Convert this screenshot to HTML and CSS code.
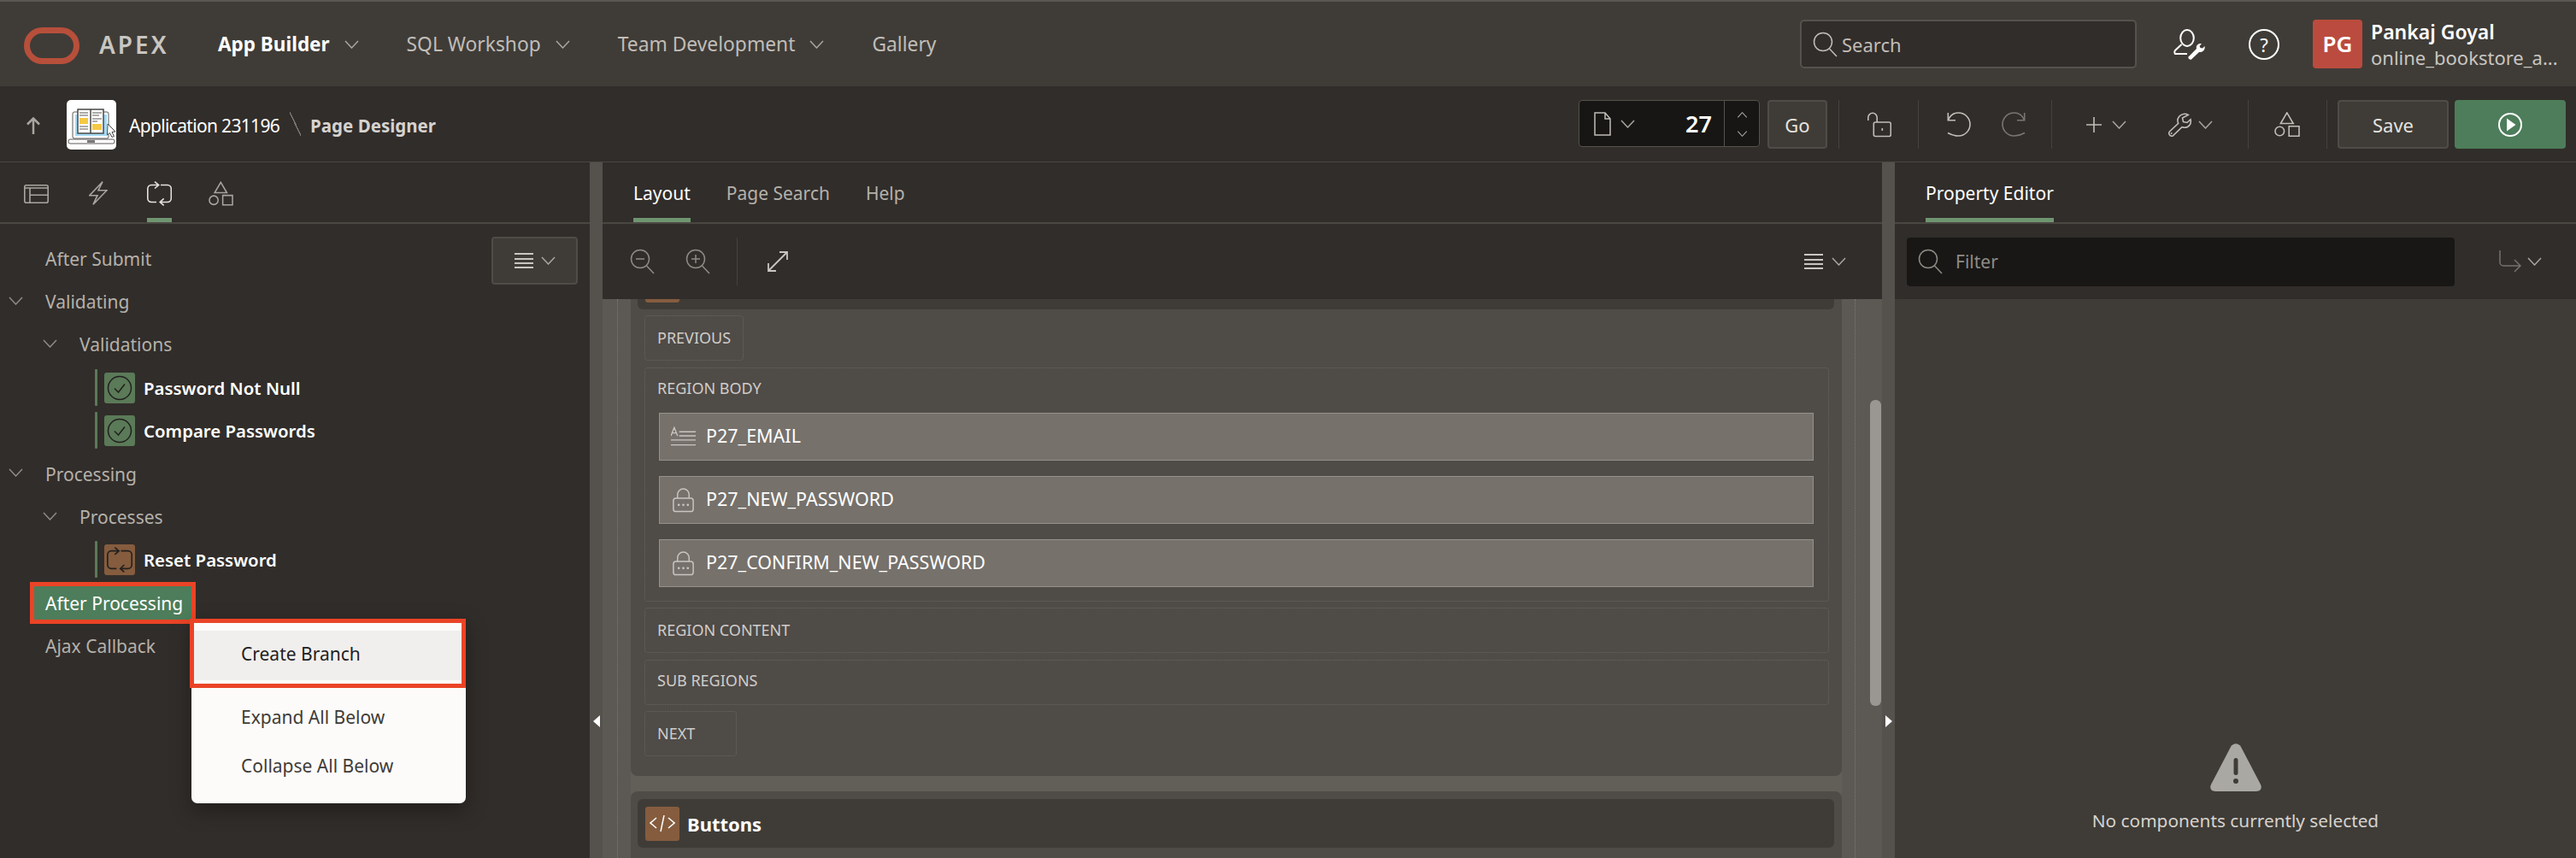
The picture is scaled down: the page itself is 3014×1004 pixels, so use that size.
FILE: index.html
```html
<!DOCTYPE html>
<html lang="en">
<head>
    <meta charset="UTF-8">
    <title>Page Designer</title>
    <link rel="stylesheet" href="styles.css">
</head>
<body>
    <svg class="sprite" width="0" height="0">
        <symbol id="i-chev" viewBox="0 0 17 10"><polyline points="1,1 8.5,9 16,1" fill="none" stroke="currentColor" stroke-width="1.5"/></symbol>
        <symbol id="i-search" viewBox="0 0 30 30"><circle cx="12" cy="12" r="10.5" fill="none" stroke="currentColor" stroke-width="1.5"/><line x1="19.5" y1="20" x2="28" y2="29" stroke="currentColor" stroke-width="1.5"/></symbol>
        <symbol id="i-menu" viewBox="0 0 22 20"><path d="M0 2h22M0 8h22M0 13h22M0 18h22" fill="none" stroke="currentColor" stroke-width="2"/></symbol>
        <symbol id="i-shapes" viewBox="0 0 30 29"><path d="M14.8.9l7.4 12.6H7.4z M1 22.5a5.3 5.3 0 1 0 10.6 0a5.3 5.3 0 1 0-10.6 0z M17.2 16.7h11.8v11.6H17.2z" fill="none" stroke="currentColor" stroke-width="1.6"/></symbol>
        <symbol id="i-sync" viewBox="0 0 29 29"><path d="M13.5 4.5H5A4.5 4.5 0 0 0 .8 9v11A4.5 4.5 0 0 0 5 24.5h6 M9 .7l4.7 3.8L9 8.5 M16 4.5h8A4.5 4.5 0 0 1 28.3 9v11a4.5 4.5 0 0 1-4.3 4.5h-8.5 M19.7 20.3l-4.5 4.2 4.5 3.8" fill="none" stroke="currentColor" stroke-width="1.6"/></symbol>
        <symbol id="i-check" viewBox="0 0 36 36"><circle cx="18" cy="18" r="13.5" fill="none" stroke="currentColor" stroke-width="1.5"/><polyline points="12,18.5 16.5,23 24,13.5" fill="none" stroke="currentColor" stroke-width="1.5"/></symbol>
        <symbol id="i-lock" viewBox="0 0 30 30"><path d="M8 13V8.5a7 7 0 0 1 14 0V13" fill="none" stroke="currentColor" stroke-width="1.5"/><rect x="3" y="13" width="24" height="16" rx="3" fill="none" stroke="currentColor" stroke-width="1.5"/><circle cx="9.5" cy="21" r="1.4" fill="currentColor"/><circle cx="15" cy="21" r="1.4" fill="currentColor"/><circle cx="20.5" cy="21" r="1.4" fill="currentColor"/></symbol>
        <symbol id="i-undo" viewBox="0 0 28 30"><path d="M1.3 9.7C3.5 4.5 8 1 13.5 1a13.5 13.5 0 0 1 0 27c-5 0-9-1.5-12.500-3.5 M1.3 1v8.700H10" fill="none" stroke="currentColor" stroke-width="1.6"/></symbol>
    </svg>

    <header class="topbar">
        <svg class="logo" viewBox="0 0 65 43"><rect x="3.5" y="3.5" width="58" height="36" rx="18" fill="none" stroke="#b74f3b" stroke-width="7"/></svg>
        <span class="brand">APEX</span>
        <nav class="nav">
            <a class="nav-link is-active">App Builder<svg class="chev"><use href="#i-chev"/></svg></a>
            <a class="nav-link">SQL Workshop<svg class="chev"><use href="#i-chev"/></svg></a>
            <a class="nav-link">Team Development<svg class="chev"><use href="#i-chev"/></svg></a>
            <a class="nav-link">Gallery</a>
        </nav>
        <div class="global-search">
            <svg class="icon-28"><use href="#i-search"/></svg>
            <span>Search</span>
        </div>
        <svg class="user-tool" viewBox="0 0 38 36">
            <ellipse cx="16" cy="10.5" rx="7.8" ry="9.5" fill="none" stroke="currentColor" stroke-width="2"/>
            <path d="M9.5 18L2 25c-.8 1-1 3 0 4h14" fill="none" stroke="currentColor" stroke-width="2"/>
            <path d="M17.5 32.5L27 23c-1-4 2-6.5 6-6l-2.5 3 1 2 2.5.5 2.5-2.5c1 4-2.5 7.5-6.5 7L21 35.5c-1.5 1-4.5-1-3.5-3z" fill="currentColor"/>
        </svg>
        <div class="help">?</div>
        <div class="avatar">PG</div>
        <div class="user-info">
            <div class="user-name">Pankaj Goyal</div>
            <div class="user-app">online_bookstore_a...</div>
        </div>
    </header>

    <div class="subbar">
        <svg class="up-arrow" viewBox="0 0 16 20"><path d="M8 20V2M1 8.5L8 1.5l7 7" fill="none" stroke="currentColor" stroke-width="2.5"/></svg>
        <div class="app-icon">
            <svg viewBox="0 0 58 58" width="58" height="58">
                <rect x="7" y="14" width="42" height="31" rx="2" fill="#fff" stroke="#5c5a58" stroke-width="1"/>
                <rect x="10" y="17" width="37" height="25" fill="#a6daf4"/>
                <path d="M13 11h15v28H13z M28 11h15v28H28z" fill="#fff" stroke="#4a4846" stroke-width="1.5"/>
                <rect x="15" y="21" width="10" height="7" fill="#f6c945"/>
                <rect x="30" y="28" width="11" height="7" fill="#f6c945"/>
                <path d="M15 15h10M15 18h10M15 31h10M15 34h10M30 15h11M30 18h8M30 22h11M30 25h6" stroke="#5c5a58" stroke-width="1.2"/>
                <rect x="2" y="46" width="54" height="5" rx="2" fill="#fff" stroke="#5c5a58" stroke-width="1"/>
                <rect x="24" y="47" width="9" height="3" fill="#777"/>
                <path d="M48 28l9 9-4 .5 2.5 5-2.5 1-2.5-5-3 2.5z" fill="#fff" stroke="#444" stroke-width="1"/>
            </svg>
        </div>
        <span class="crumb">Application 231196</span>
        <span class="crumb-sep"></span>
        <span class="crumb-page">Page Designer</span>

        <div class="toolbar">
            <div class="page-picker">
                <svg class="page-icon" viewBox="0 0 20 28"><path d="M1 1h12l6 7v19H1z M13 1v7h6" fill="none" stroke="currentColor" stroke-width="1.5"/></svg>
                <svg class="chev"><use href="#i-chev"/></svg>
                <span class="page-num">27</span>
                <div class="spinner">
                    <svg class="spin-chev up"><use href="#i-chev"/></svg>
                    <svg class="spin-chev"><use href="#i-chev"/></svg>
                </div>
            </div>
            <button class="btn btn-go">Go</button>
            <i class="tool-sep sep-a"></i>
            <svg class="tool-lock" viewBox="0 0 28 30"><path d="M.8 10V6.5a5.2 5.2 0 0 1 10.4 0V12" fill="none" stroke="currentColor" stroke-width="1.6"/><rect x="7.3" y="12" width="20" height="16.5" rx="2" fill="none" stroke="currentColor" stroke-width="1.6"/><rect x="16.5" y="19" width="1.6" height="3" fill="currentColor"/></svg>
            <i class="tool-sep sep-b"></i>
            <svg class="tool-undo"><use href="#i-undo"/></svg>
            <svg class="tool-redo"><use href="#i-undo"/></svg>
            <i class="tool-sep sep-c"></i>
            <svg class="tool-plus" viewBox="0 0 18 18"><path d="M9 0v18M0 9h18" stroke="currentColor" stroke-width="1.6"/></svg>
            <svg class="chev chev-plus"><use href="#i-chev"/></svg>
            <svg class="tool-wrench" viewBox="0 0 28 30"><path d="M23.3 3.5C20 1.5 15 2 12.5 5.5 10.5 8.3 10.5 11 11.7 13.3L1.7 22.7c-2 2-.5 6 3 5.5l.5-.2L16 17.7c3.5 1 7 .3 9-2.500 1.5-2 1.5-4.5 1-6.500L22 12.500l-4.500-1-1-4.500z" fill="none" stroke="currentColor" stroke-width="1.6"/><circle cx="3.7" cy="25" r="1" fill="currentColor"/></svg>
            <svg class="chev chev-wrench"><use href="#i-chev"/></svg>
            <i class="tool-sep sep-d"></i>
            <svg class="tool-shapes"><use href="#i-shapes"/></svg>
            <i class="tool-sep sep-e"></i>
            <button class="btn btn-save">Save</button>
            <button class="btn-run">
                <svg viewBox="0 0 30 30" width="30" height="30"><circle cx="15" cy="15" r="13" fill="none" stroke="#fff" stroke-width="2"/><path d="M11 7.5l10.5 7.5-10.5 7.5z" fill="#fff"/></svg>
            </button>
        </div>
    </div>

    <main class="designer">
        <section class="panel-left">
            <div class="tabs tabs-icons">
                <div class="icon-tab">
                    <svg viewBox="0 0 29 22" class="tab-svg"><rect x=".8" y=".8" width="27.4" height="20.4" rx="2" fill="none" stroke="currentColor" stroke-width="1.6"/><path d="M1 4h27M7 12.3h21M7 4v17" fill="none" stroke="currentColor" stroke-width="1.6"/></svg>
                </div>
                <div class="icon-tab">
                    <svg viewBox="0 0 22 29" class="tab-svg tab-bolt"><path d="M16 .7L.7 16.7H10L5 27.3 21 10.7H11z" fill="none" stroke="currentColor" stroke-width="1.6"/></svg>
                </div>
                <div class="icon-tab is-active">
                    <svg class="tab-svg tab-square"><use href="#i-sync"/></svg>
                </div>
                <div class="icon-tab">
                    <svg class="tab-svg tab-square"><use href="#i-shapes"/></svg>
                </div>
            </div>
            <div class="tree">
                <div class="tree-row lvl-0"><span class="tree-label">After Submit</span></div>
                <div class="tree-row lvl-0"><svg class="tree-chev"><use href="#i-chev"/></svg><span class="tree-label">Validating</span></div>
                <div class="tree-row lvl-1"><svg class="tree-chev"><use href="#i-chev"/></svg><span class="tree-label">Validations</span></div>
                <div class="tree-row lvl-2"><span class="node-icon node-green"><svg><use href="#i-check"/></svg></span><span class="node-label">Password Not Null</span></div>
                <div class="tree-row lvl-2"><span class="node-icon node-green"><svg><use href="#i-check"/></svg></span><span class="node-label">Compare Passwords</span></div>
                <div class="tree-row lvl-0"><svg class="tree-chev"><use href="#i-chev"/></svg><span class="tree-label">Processing</span></div>
                <div class="tree-row lvl-1"><svg class="tree-chev"><use href="#i-chev"/></svg><span class="tree-label">Processes</span></div>
                <div class="tree-row lvl-2"><span class="node-icon node-brown"><svg class="node-sync"><use href="#i-sync"/></svg></span><span class="node-label">Reset Password</span></div>
                <div class="tree-row lvl-0"><span class="tree-label is-selected">After Processing</span></div>
                <div class="tree-row lvl-0"><span class="tree-label">Ajax Callback</span></div>
            </div>
            <button class="btn tree-menu-btn"><svg class="menu-icon"><use href="#i-menu"/></svg><svg class="chev"><use href="#i-chev"/></svg></button>
            <div class="context-menu">
                <div class="menu-item is-highlight">Create Branch</div>
                <div class="menu-item first-plain">Expand All Below</div>
                <div class="menu-item">Collapse All Below</div>
            </div>
        </section>

        <div class="splitter"><svg class="split-arrow" viewBox="0 0 8 14"><path d="M8 0v14L0 7z" fill="#fff"/></svg></div>

        <section class="panel-center">
            <div class="tabs tabs-text">
                <span class="text-tab is-active">Layout</span>
                <span class="text-tab">Page Search</span>
                <span class="text-tab">Help</span>
            </div>
            <div class="center-tools">
                <svg class="zoom-icon" viewBox="0 0 30 30"><use href="#i-search"/><path d="M7 12h10" stroke="currentColor" stroke-width="1.5"/></svg>
                <svg class="zoom-icon" viewBox="0 0 30 30"><use href="#i-search"/><path d="M7 12h10M12 7v10" stroke="currentColor" stroke-width="1.5"/></svg>
                <i class="center-sep"></i>
                <svg class="expand-icon" viewBox="0 0 24 24"><path d="M1 23L23 1M14 1h9v9M1 14v9h9" fill="none" stroke="currentColor" stroke-width="1.8"/></svg>
                <div class="center-menu"><svg class="menu-icon"><use href="#i-menu"/></svg><svg class="chev"><use href="#i-chev"/></svg></div>
            </div>
            <div class="canvas">
                <div class="card card-scrolled">
                    <div class="card-head"><span class="card-icon"></span></div>
                    <div class="slots">
                        <div class="slot slot-small slot-prev">PREVIOUS</div>
                        <div class="slot slot-body">
                            <div class="slot-title">REGION BODY</div>
                            <div class="items">
                                <div class="item">
                                    <svg class="item-icon" viewBox="0 0 30 30"><path d="M0 14L4 4l4 10M1.5 10.5h5 M10 9h20M10 14h20M0 19h30M0 25h30" fill="none" stroke="currentColor" stroke-width="1.4"/></svg>
                                    P27_EMAIL
                                </div>
                                <div class="item"><svg class="item-icon"><use href="#i-lock"/></svg>P27_NEW_PASSWORD</div>
                                <div class="item"><svg class="item-icon"><use href="#i-lock"/></svg>P27_CONFIRM_NEW_PASSWORD</div>
                            </div>
                        </div>
                        <div class="slot slot-wide">REGION CONTENT</div>
                        <div class="slot slot-wide slot-sub">SUB REGIONS</div>
                        <div class="slot slot-small slot-next">NEXT</div>
                    </div>
                </div>
                <div class="card card-buttons">
                    <div class="card-head">
                        <span class="card-icon"><svg viewBox="0 0 30 20" width="30" height="20"><path d="M8 3L1 9l7 6M22 3l7 6-7 6M17 0l-4 19" fill="none" stroke="#fff" stroke-width="1.5"/></svg></span>
                        <span class="card-title">Buttons</span>
                    </div>
                </div>
                <div class="scrollbar"></div>
            </div>
        </section>

        <div class="splitter"><svg class="split-arrow" viewBox="0 0 8 14"><path d="M0 0v14l8-7z" fill="#fff"/></svg></div>

        <section class="panel-right">
            <div class="tabs tabs-text">
                <span class="text-tab is-active">Property Editor</span>
            </div>
            <div class="right-tools">
                <div class="filter">
                    <svg class="icon-28"><use href="#i-search"/></svg>
                    <span>Filter</span>
                </div>
                <svg class="branch-icon" viewBox="0 0 26 26"><path d="M1 0v14a4 4 0 0 0 4 4h20M18 11l7 7-7 7" fill="none" stroke="currentColor" stroke-width="1.5"/></svg>
                <svg class="chev"><use href="#i-chev"/></svg>
            </div>
            <div class="empty-state">
                <svg class="warn-icon" viewBox="0 0 60 56"><path d="M24 4c3-5 9-5 12 0l23 44c2 4 0 8-5 8H6c-5 0-7-4-5-8z" fill="#aaa8a3"/><rect x="27.5" y="17" width="5" height="20" rx="2.5" fill="#3f3c37"/><circle cx="30" cy="44" r="3" fill="#3f3c37"/></svg>
                <div class="empty-text">No components currently selected</div>
            </div>
        </section>
    </main>
</body>
</html>
```
FILE: styles.css
```css
* {
    box-sizing: border-box;
    padding: 0;
    margin: 0;
}

:root {
    --bar: #3f3c37;
    --bar-dark: #312d2a;
    --line: #4a4743;
    --field: #171614;
    --card: #4f4b47;
    --green: #4d7d5a;
    --tab-green: #6f9570;
    --brown: #855c3e;
    --red: #ea4426;
    --text: #fff;
    --muted: #b5b1ab;
}

html, body {
    width: 3014px;
    height: 1004px;
    overflow: hidden;
}

body {
    display: flex;
    flex-direction: column;
    background-color: var(--bar-dark);
    color: var(--text);
    font-family: "Noto Sans", "Open Sans", sans-serif;
    font-size: 22.8px;
}

.sprite {
    position: absolute;
}

svg {
    display: block;
    flex: none;
}

.chev {
    width: 17px;
    height: 10px;
    color: #a9a6a1;
}

.icon-28 {
    width: 30px;
    height: 30px;
}

/* top bar */
.topbar {
    flex: none;
    height: 101px;
    border-top: 2px solid #5a5753;
    background-color: var(--bar);
    display: flex;
    align-items: center;
    padding: 0 27px 0 28px;
}

.logo {
    width: 65px;
    height: 43px;
    margin-top: 3px;
}

.brand {
    margin-left: 23px;
    width: 139px;
    font-size: 28px;
    font-weight: 600;
    letter-spacing: 3px;
    color: #c9c6c2;
}

.nav {
    display: flex;
    align-items: center;
    gap: 56px;
}

.nav-link {
    display: flex;
    align-items: center;
    gap: 17px;
    color: #c1bdb8;
}

.nav-link.is-active {
    color: #fff;
    font-size: 22.5px;
    font-weight: 700;
}

.global-search {
    margin-left: auto;
    width: 394px;
    height: 57px;
    display: flex;
    align-items: center;
    gap: 4px;
    padding-left: 13px;
    background-color: var(--bar-dark);
    border: 2px solid #55524e;
    border-radius: 5px;
    color: #c1bdb8;
    font-size: 22px;
}

.user-tool {
    width: 38px;
    height: 36px;
    margin-left: 43px;
    color: #fff;
}

.help {
    width: 36px;
    height: 36px;
    margin-left: 50px;
    border: 2px solid #fff;
    border-radius: 50%;
    font-size: 22px;
    line-height: 32px;
    text-align: center;
}

.avatar {
    width: 58px;
    height: 57px;
    margin-left: 39px;
    background-color: #bb4b3e;
    border-radius: 4px;
    font-size: 26px;
    font-weight: 600;
    line-height: 57px;
    text-align: center;
}

.user-info {
    margin-left: 10px;
    width: 213px;
}

.user-name {
    font-weight: 600;
    font-size: 23px;
    line-height: 30px;
}

.user-app {
    font-size: 22px;
    line-height: 30px;
    color: #c9c6c2;
    white-space: nowrap;
}

/* page designer bar */
.subbar {
    flex: none;
    height: 89px;
    border-bottom: 1px solid var(--line);
    display: flex;
    align-items: flex-start;
    padding: 16px 12px 0 31px;
}

.up-arrow {
    width: 16px;
    height: 20px;
    margin: 20px 31px 0 0;
    color: #a9a6a1;
}

.app-icon {
    width: 58px;
    height: 58px;
    background-color: #fff;
    border-radius: 5px;
    overflow: hidden;
}

.crumb {
    margin-left: 15px;
    font-size: 21px;
    letter-spacing: -.67px;
    line-height: 60px;
    white-space: nowrap;
}

.crumb-sep {
    width: 13px;
    height: 28px;
    margin: 14px 11px 0 12px;
    background: linear-gradient(to top right, transparent 47%, #7c7873 47%, #7c7873 53%, transparent 53%);
}

.crumb-page {
    font-size: 20.5px;
    line-height: 60px;
    font-weight: 700;
    color: #d6d3cf;
}

.toolbar {
    margin-left: auto;
    display: flex;
    align-items: flex-start;
    color: #c1bdb8;
}

.page-picker {
    width: 212px;
    height: 55px;
    display: flex;
    align-items: center;
    padding-left: 17px;
    background-color: var(--field);
    border: 1px solid #55524e;
    border-radius: 4px;
}

.page-icon {
    width: 20px;
    height: 28px;
    margin-right: 11px;
}

.page-num {
    margin-left: auto;
    font-size: 27px;
    font-weight: 600;
    color: #fff;
}

.spinner {
    width: 41px;
    height: 100%;
    margin-left: 14px;
    border-left: 1px solid #55524e;
    display: flex;
    flex-direction: column;
    justify-content: space-between;
    align-items: center;
    padding: 13px 0 11px;
}

.spin-chev {
    width: 13px;
    height: 7px;
    color: #a9a6a1;
}

.spin-chev.up {
    transform: scaleY(-1);
}

.btn {
    height: 57px;
    background-color: var(--bar);
    border: 2px solid #4f4c48;
    border-radius: 4px;
    color: #e6e3df;
    font: inherit;
    font-size: 22px;
}

.btn-go {
    width: 70px;
    margin-left: 9px;
}

.tool-sep {
    display: block;
    width: 1px;
    height: 57px;
    background-color: #45423e;
}

.sep-a { margin-left: 13px; }
.sep-b { margin-left: 31px; }
.sep-c { margin-left: 30px; }
.sep-d { margin-left: 41px; }
.sep-e { margin-left: 31px; }

.tool-lock, .tool-undo, .tool-redo, .tool-wrench {
    width: 28px;
    height: 30px;
    margin-top: 14px;
}

.tool-lock { margin-left: 33px; }
.tool-undo { margin-left: 33px; }

.tool-redo {
    margin-left: 36px;
    color: #7a7671;
    transform: scaleX(-1);
}

.tool-plus {
    width: 18px;
    height: 18px;
    margin: 20px 0 0 40px;
}

.chev-plus {
    margin: 24px 0 0 12px;
}

.tool-wrench {
    margin-left: 49px;
}

.chev-wrench {
    margin: 24px 0 0 7px;
}

.tool-shapes {
    width: 30px;
    height: 29px;
    margin: 14px 0 0 30px;
}

.btn-save {
    width: 130px;
    margin-left: 12px;
}

.btn-run {
    width: 130px;
    height: 57px;
    margin-left: 7px;
    display: flex;
    align-items: center;
    justify-content: center;
    background-color: var(--green);
    border: 0;
    border-radius: 4px;
}

/* main columns */
.designer {
    flex: 1;
    min-height: 0;
    display: grid;
    grid-template-columns: 690px 15px 1497px 15px 797px;
    grid-template-rows: minmax(0, 1fr);
}

.splitter {
    background-color: #55514d;
    padding-top: 647px;
}

.split-arrow {
    width: 8px;
    height: 14px;
    margin: 0 auto;
}

.tabs {
    flex: none;
    height: 72px;
    border-bottom: 2px solid var(--line);
    display: flex;
}

.tabs-icons {
    padding-left: 28px;
}

.icon-tab {
    width: 29px;
    margin-right: 43px;
    height: 70px;
    padding-top: 22px;
    color: #a9a6a1;
}

.icon-tab.is-active {
    color: #e6e3df;
    border-bottom: 5px solid var(--tab-green);
}

.tab-svg {
    width: 29px;
    height: 22px;
    margin-top: 4px;
}

.tab-bolt {
    width: 22px;
    height: 29px;
    margin: 0 auto;
}

.tab-square {
    height: 29px;
    margin-top: 0;
}

.tabs-text {
    gap: 42px;
    padding-left: 36px;
}

.text-tab {
    height: 70px;
    padding-top: 21px;
    font-size: 21px;
    line-height: 30px;
    color: #b5b1ab;
}

.text-tab.is-active {
    color: #fff;
    border-bottom: 5px solid var(--tab-green);
}

/* left panel */
.panel-left {
    position: relative;
    min-width: 0;
}

.tree {
    padding-top: 15.5px;
}

.tree-row {
    height: 50.4px;
    display: flex;
    align-items: center;
    color: var(--muted);
    font-size: 21px;
}

.lvl-0 { padding-left: 53px; }
.lvl-1 { padding-left: 93px; }
.lvl-2 { padding-left: 112px; }

.tree-chev {
    width: 17px;
    height: 10px;
    margin-left: -43px;
    margin-right: 26px;
    margin-top: -3px;
    color: #8f8b86;
}

.tree-label {
    white-space: nowrap;
}

.tree-label.is-selected {
    margin-left: -18px;
    padding: 0 10px 0 13px;
    height: 49px;
    display: flex;
    align-items: center;
    color: #fff;
    background-color: var(--green);
    border: 5px solid var(--red);
}

.node-icon {
    display: flex;
    align-items: center;
    justify-content: center;
    width: 36px;
    height: 36px;
    margin-left: 10px;
    border-radius: 3px;
    color: #22211f;
    position: relative;
}

.node-icon::before {
    content: "";
    position: absolute;
    left: -11px;
    top: -4px;
    width: 3px;
    height: 43px;
    border-radius: 1px;
    background-color: #5b7a58;
}

.node-icon svg {
    width: 36px;
    height: 36px;
}

.node-icon .node-sync {
    width: 30px;
    height: 30px;
}

.node-green {
    background-color: #5b7a58;
}

.node-brown {
    background-color: var(--brown);
}

.node-label {
    margin-left: 10px;
    font-size: 20.4px;
    font-weight: 600;
    color: #fff;
}

.tree-menu-btn {
    position: absolute;
    left: 575px;
    top: 87px;
    width: 101px;
    height: 56px;
    display: flex;
    align-items: center;
    justify-content: center;
    gap: 9px;
}

.menu-icon {
    width: 22px;
    height: 20px;
    color: #c9c6c2;
}

.context-menu {
    position: absolute;
    left: 224px;
    top: 534px;
    width: 321px;
    height: 216px;
    background-color: #fcfbfa;
    border-radius: 0 0 7px 7px;
    box-shadow: 0 8px 24px rgba(0, 0, 0, .35);
    color: #3f3c37;
    font-size: 21px;
}

.menu-item {
    height: 57px;
    display: flex;
    align-items: center;
    padding-left: 58px;
}

.menu-item.is-highlight {
    margin-left: -2px;
    padding-left: 55px;
    height: 81px;
    color: #22211f;
    background-color: #f1efed;
    border: 5px solid var(--red);
    box-shadow: inset 0 9px 0 #fcfbfa, inset 0 -4px 0 #fcfbfa;
}

.first-plain {
    margin-top: 5px;
}

/* center panel */
.panel-center, .panel-right {
    min-width: 0;
    display: flex;
    flex-direction: column;
}

.center-tools {
    flex: none;
    height: 88px;
    display: flex;
    align-items: center;
    padding: 0 42px 0 32px;
    color: #8f8b86;
}

.zoom-icon {
    width: 30px;
    height: 30px;
    margin-right: 35px;
}

.center-sep {
    display: block;
    width: 1px;
    height: 56px;
    background-color: #45423e;
    margin-left: -5px;
}

.expand-icon {
    width: 24px;
    height: 24px;
    margin-left: 35px;
    color: #c9c6c2;
}

.center-menu {
    margin-left: auto;
    display: flex;
    align-items: center;
    gap: 10px;
}

.canvas {
    position: relative;
    flex: 1;
    min-height: 0;
    overflow: hidden;
    padding: 0 47px 0 33px;
    background: linear-gradient(to right, #5c5853 33px, #625e58 33px, #625e58 calc(100% - 47px), #5c5853 calc(100% - 47px));
}

/* dotted guide lines of the layout grid */
.canvas::before, .canvas::after {
    content: "";
    position: absolute;
    top: 0;
    bottom: 0;
    border-left: 1px dotted #7d7974;
}

.canvas::before {
    left: 17px;
}

.canvas::after {
    right: 31px;
}

.card {
    background-color: var(--card);
    border-radius: 8px;
    padding: 9px 9px 0 8px;
}

.card-scrolled {
    margin-top: -54px;
    height: 612px;
}

.card-buttons {
    margin-top: 18px;
    height: 200px;
}

.card-head {
    height: 57px;
    display: flex;
    align-items: center;
    padding-left: 9px;
    background-color: var(--bar);
    border-radius: 6px;
}

.card-icon {
    width: 40px;
    height: 40px;
    display: flex;
    align-items: center;
    justify-content: center;
    background-color: var(--brown);
    border-radius: 3px;
}

.card-title {
    margin-left: 9px;
    font-weight: 700;
    font-size: 22px;
}

.slots {
    margin-top: 7px;
    padding: 0 6px 0 8px;
    display: flex;
    flex-direction: column;
    gap: 7.5px;
    font-size: 18px;
    color: #d0cdc9;
}

.slot {
    border: 1px dotted #68645f;
    border-radius: 4px;
    padding-left: 14px;
}

.slot-small, .slot-wide {
    display: flex;
    align-items: center;
    height: 53px;
    padding-bottom: 2px;
}

.slot-sub {
    padding-bottom: 5px;
}

.slot-prev {
    width: 116px;
}

.slot-next {
    width: 108px;
}

.slot-body {
    height: 274px;
    padding-right: 17px;
    padding-left: 16px;
}

.slot-title {
    height: 52px;
    margin-left: -2px;
    padding-top: 10px;
    line-height: 26px;
}

.items {
    display: flex;
    flex-direction: column;
    gap: 18px;
}

.item {
    height: 56px;
    display: flex;
    align-items: center;
    gap: 12px;
    padding: 0 0 3px 13px;
    background-color: #76716b;
    border: 1px solid #95918b;
    font-size: 21.5px;
    color: #fff;
}

.item-icon {
    width: 29px;
    height: 30px;
    margin-top: 3px;
    color: #c9c6c2;
}

.scrollbar {
    position: absolute;
    right: 1px;
    top: 118px;
    width: 13px;
    height: 358px;
    background-color: #9a9692;
    border-radius: 6px;
}

/* right panel */
.panel-right {
    background-color: var(--bar-dark);
}

.right-tools {
    flex: none;
    height: 88px;
    display: flex;
    align-items: center;
    padding-left: 14px;
    color: #75716c;
}

.filter {
    width: 641px;
    height: 57px;
    display: flex;
    align-items: center;
    gap: 14px;
    padding-left: 13px;
    background-color: #181715;
    border-radius: 4px;
    font-size: 21px;
    color: #8f8b86;
}

.branch-icon {
    width: 26px;
    height: 26px;
    margin: 0 7px 0 52px;
}

.empty-state {
    flex: 1;
    min-height: 0;
    display: flex;
    flex-direction: column;
    align-items: center;
    justify-content: flex-end;
    padding-bottom: 29px;
    background-color: var(--bar);
}

.warn-icon {
    width: 60px;
    height: 56px;
}

.empty-text {
    margin-top: 19px;
    font-size: 20.8px;
    line-height: 30px;
    color: #d6d3cf;
}
```
